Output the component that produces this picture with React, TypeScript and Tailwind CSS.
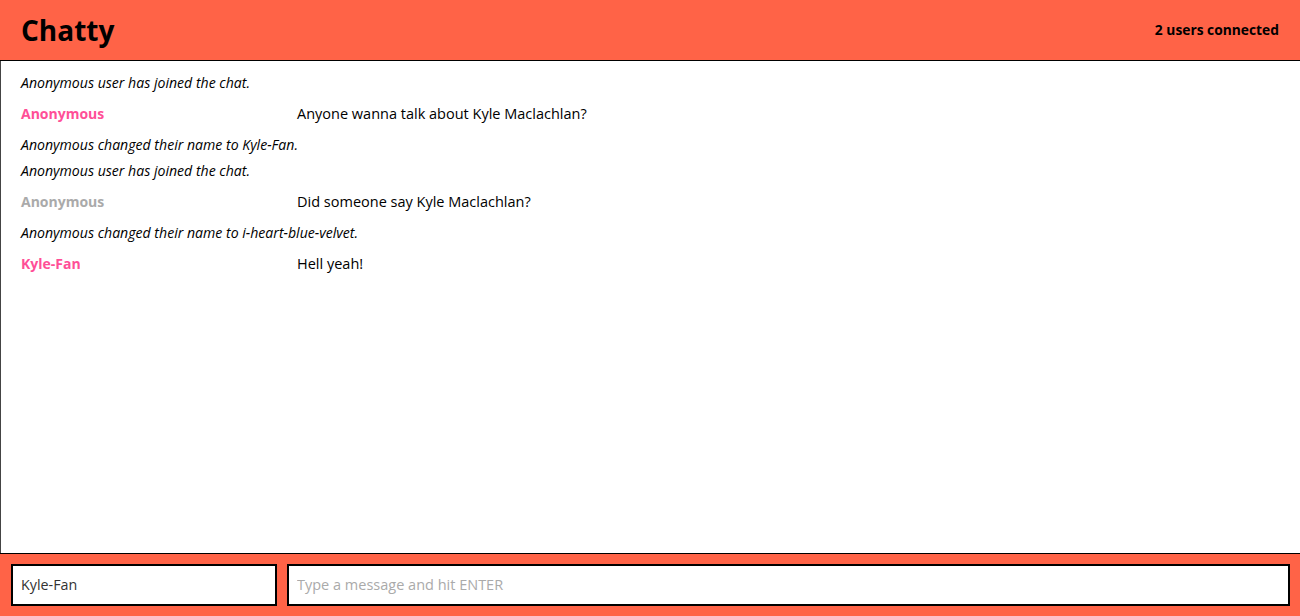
import React from 'react';

type Msg =
  | { kind: 'system'; text: string }
  | { kind: 'user'; name: string; color: string; text: string };

const messages: Msg[] = [
  { kind: 'system', text: 'Anonymous user has joined the chat.' },
  { kind: 'user', name: 'Anonymous', color: 'text-[#ff4f97]', text: 'Anyone wanna talk about Kyle Maclachlan?' },
  { kind: 'system', text: 'Anonymous changed their name to Kyle-Fan.' },
  { kind: 'system', text: 'Anonymous user has joined the chat.' },
  { kind: 'user', name: 'Anonymous', color: 'text-[#aaaaaa]', text: 'Did someone say Kyle Maclachlan?' },
  { kind: 'system', text: 'Anonymous changed their name to i-heart-blue-velvet.' },
  { kind: 'user', name: 'Kyle-Fan', color: 'text-[#ff4f97]', text: 'Hell yeah!' },
];

const App: React.FC = () => {
  return (
    <div className="flex h-screen flex-col font-['Open_Sans',sans-serif] text-black">
      {/* Navbar */}
      <nav className="flex h-[61px] shrink-0 items-center justify-between border-b border-black bg-[#ff6347] px-[21px]">
        <span className="text-[28px] font-bold leading-none">Chatty</span>
        <span className="text-[13.8px] font-bold">2 users connected</span>
      </nav>

      {/* Messages */}
      <main className="flex-1 overflow-hidden border-l border-[#444] pt-[9px] pl-5">
        {messages.map((m, i) =>
          m.kind === 'system' ? (
            <div key={i} className="h-[26px] text-[14.1px] italic leading-[26px]">
              {m.text}
            </div>
          ) : (
            <div key={i} className="flex h-9 items-center text-sm">
              <span className={`w-[276px] shrink-0 font-bold ${m.color}`}>{m.name}</span>
              <span className="text-[14.5px]">{m.text}</span>
            </div>
          )
        )}
      </main>

      {/* Chat bar */}
      <footer className="flex h-[63px] shrink-0 gap-[10px] border-t border-black bg-[#ff6347] py-[10px] pl-[11px] pr-[10px]">
        <input
          className="h-[42px] w-[266px] border-2 border-black bg-white px-2 pb-[2px] text-[14.3px] text-[#333] outline-none"
          defaultValue="Kyle-Fan"
        />
        <input
          className="h-[42px] flex-1 border-2 border-black bg-white px-2 pb-[2px] text-[14.5px] outline-none placeholder:text-[#aaa]"
          placeholder="Type a message and hit ENTER"
        />
      </footer>
    </div>
  );
};

export default App;
